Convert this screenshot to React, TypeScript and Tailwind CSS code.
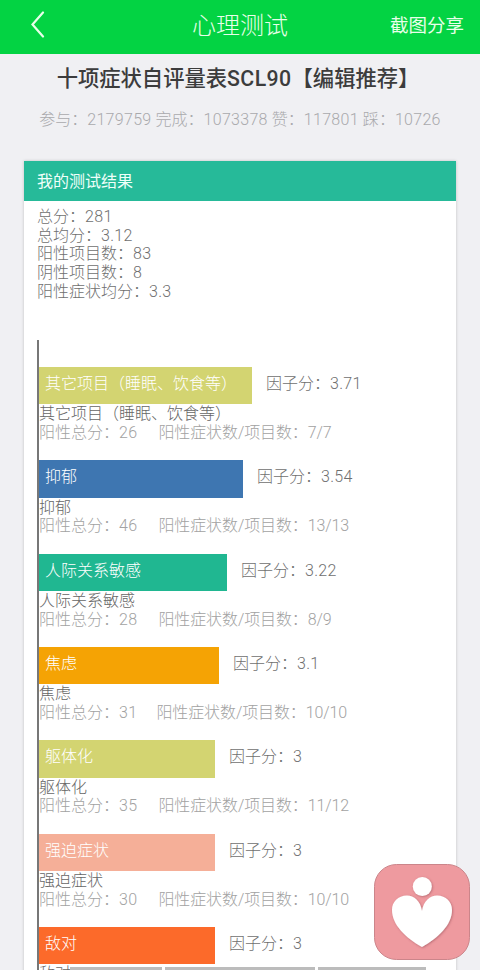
const counts = [
  { label: '参与', value: '2179759' },
  { label: '完成', value: '1073378' },
  { label: '赞', value: '117801' },
  { label: '踩', value: '10726' },
];

const summary = [
  { label: '总分', value: '281' },
  { label: '总均分', value: '3.12' },
  { label: '阳性项目数', value: '83' },
  { label: '阴性项目数', value: '8' },
  { label: '阳性症状均分', value: '3.3' },
];

type FactorItem = {
  name: string;
  score: string;
  width: number;
  color: string;
  total?: string;
  ratio?: string;
  gap?: number;
};

const factors: FactorItem[] = [
  { name: '其它项目（睡眠、饮食等）', score: '3.71', total: '26', ratio: '7/7', width: 213, color: 'bg-[#d3d471]' },
  { name: '抑郁', score: '3.54', total: '46', ratio: '13/13', width: 204, color: 'bg-[#3e76b1]' },
  { name: '人际关系敏感', score: '3.22', total: '28', ratio: '8/9', width: 188, color: 'bg-[#20b791]' },
  { name: '焦虑', score: '3.1', total: '31', ratio: '10/10', gap: 19, width: 180, color: 'bg-[#f5a304]' },
  { name: '躯体化', score: '3', total: '35', ratio: '11/12', width: 176, color: 'bg-[#d3d471]' },
  { name: '强迫症状', score: '3', total: '30', ratio: '10/10', width: 176, color: 'bg-[#f5af98]' },
  { name: '敌对', score: '3', width: 176, color: 'bg-[#fc6a2a]' },
];

function Num({ children }: { children: string }) {
  return <span className="tracking-[0.3px]">{children}</span>;
}

function Header() {
  return (
    <header className="grid h-[53.5px] grid-cols-[1fr_auto_1fr] items-center bg-[#03d343] pr-4 pb-1 pl-[30px] text-[#e8ffe9]">
      <svg className="h-[27px] w-[15px]" viewBox="0 0 15 27" fill="none" stroke="currentColor" strokeWidth="2.2" strokeLinecap="round">
        <path d="M13 1.500 2.500 13.500 13 25.500" />
      </svg>
      <h1 className="relative top-px right-[7px] text-[24px] leading-none font-light">心理测试</h1>
      <span className="relative top-px justify-self-end text-[18.5px] leading-none font-normal">截图分享</span>
    </header>
  );
}

function Factor({ item }: { item: FactorItem }) {
  return (
    <li className="mb-[18.67px] leading-[18.67px]">
      <div className="flex h-[37.33px]">
        <div
          className={`flex items-start pt-2 pl-[6px] whitespace-nowrap text-white ${item.color}`}
          style={{ width: item.width }}
        >
          {item.name}
        </div>
        <span className="pt-2 pl-[14px] text-[#6f6f6f]">
          因子分：<Num>{item.score}</Num>
        </span>
      </div>
      <div className="pt-px text-[#666666]">{item.name}</div>
      {item.total && (
        <div className="-mb-px flex text-[#a2a2a2]" style={{ gap: item.gap ?? 21 }}>
          <span>
            阳性总分：<Num>{item.total}</Num>
          </span>
          <span className="tracking-[-0.1px]">阳性症状数/项目数：{item.ratio}</span>
        </div>
      )}
    </li>
  );
}

function HeartBadge() {
  return (
    <svg className="absolute top-[864px] left-[374px] h-24 w-24" viewBox="0 0 96 96">
      <defs>
        <filter id="soft" x="-20%" y="-20%" width="140%" height="140%">
          <feDropShadow dx="0.8" dy="0.8" stdDeviation="1" floodColor="#8d4550" floodOpacity="0.55" />
        </filter>
      </defs>
      <rect x="0.5" y="0.5" width="95" height="95" rx="22" fill="#ee9a9f" stroke="#cb858a" />
      <g fill="#fff" filter="url(#soft)">
        <circle cx="48.3" cy="22.5" r="9.5" />
        <path d="M48 47C46.500 37 40 31.500 33 31.500C24 31.500 18 38 18 46C18 61 32 74 48 83C64 74 78 61 78 46C78 38 72 31.500 63 31.500C56 31.500 49.500 37 48 47Z" />
      </g>
    </svg>
  );
}

export default function App() {
  return (
    <div className="relative h-[970px] w-[480px] overflow-hidden bg-[#f0f0f3] font-[Roboto,'Noto_Sans_CJK_SC',sans-serif] text-[16px] font-light">
      <Header />

      <div className="flex h-[107px] flex-col items-center whitespace-nowrap">
        <h2 className="mt-3 mr-1 text-[21.3px] leading-[26px] font-medium text-[#3c3c3c]">
          十项症状自评量表<span className="tracking-[0.4px]">SCL90</span>【编辑推荐】
        </h2>
        <p className="mt-[18px] flex gap-1 leading-5 text-[#a9a9ac]">
          {counts.map((c) => (
            <span key={c.label}>
              {c.label}：<Num>{c.value}</Num>
            </span>
          ))}
        </p>
      </div>

      <section className="mx-6 h-[840px] bg-white shadow-[0_0_3px_rgba(0,0,0,0.2)]">
        <h3 className="h-10 bg-[#26ba99] pl-[13px] leading-[41px] font-normal text-[#effffa]">我的测试结果</h3>

        <div className="pt-[7.5px] pl-[13px] leading-[18.67px] text-[#6f6f6f]">
          {summary.map((s) => (
            <div key={s.label}>
              {s.label}：<Num>{s.value}</Num>
            </div>
          ))}
        </div>

        <ul className="mt-[39px] ml-[13px] border-l-2 border-[#777777] pt-[26.5px]">
          {factors.map((item) => (
            <Factor key={item.name} item={item} />
          ))}
        </ul>
      </section>

      {/* top edge of the bottom tab strip */}
      <div className="absolute top-[967px] left-[70px] flex h-[3px] gap-[3px]">
        <div className="w-[92px] bg-[#bcbcbc]" />
        <div className="w-[150px] bg-[#bcbcbc]" />
        <div className="w-[108px] bg-[#bcbcbc]" />
      </div>
      <HeartBadge />
    </div>
  );
}
